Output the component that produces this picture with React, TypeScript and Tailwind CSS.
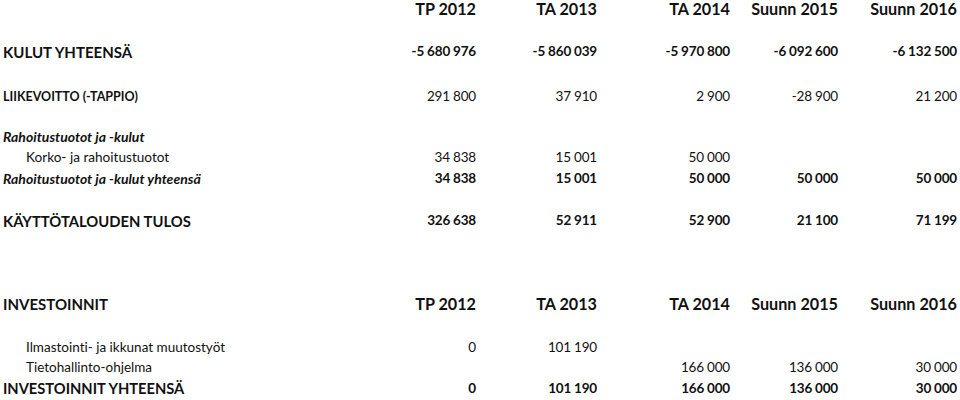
import React from 'react';

type Row = {
  label: string;
  values: string[];
  cls: string; // label style
  numCls: string; // number style
  indent?: boolean;
  h: string;
  mt?: string;
};

const years = ['TP 2012', 'TA 2013', 'TA 2014', 'Suunn 2015', 'Suunn 2016'];

const numBold = 'text-[13.5px] font-bold tracking-[-0.2px]';
const numReg = 'text-[13.5px] font-normal tracking-[-0.2px]';

const rows: Row[] = [
  { label: 'KULUT YHTEENSÄ', values: ['-5 680 976', '-5 860 039', '-5 970 800', '-6 092 600', '-6 132 500'], cls: 'text-[15px] font-bold', numCls: numBold, h: 'h-[20px]', mt: 'mt-[24px]' },
  { label: 'LIIKEVOITTO (-TAPPIO)', values: ['291 800', '37 910', '2 900', '-28 900', '21 200'], cls: 'text-[12.5px] font-bold', numCls: numReg, h: 'h-[20px]', mt: 'mt-[25px]' },
  { label: 'Rahoitustuotot ja -kulut', values: ['', '', '', '', ''], cls: 'text-[14px] font-bold italic', numCls: numReg, h: 'h-[21px]', mt: 'mt-[19px]' },
  { label: 'Korko- ja rahoitustuotot', values: ['34 838', '15 001', '50 000', '', ''], cls: 'text-[13.6px]', numCls: numReg, indent: true, h: 'h-[21px]' },
  { label: 'Rahoitustuotot ja -kulut yhteensä', values: ['34 838', '15 001', '50 000', '50 000', '50 000'], cls: 'text-[14px] font-bold italic', numCls: numBold, h: 'h-[21px]' },
  { label: 'KÄYTTÖTALOUDEN TULOS', values: ['326 638', '52 911', '52 900', '21 100', '71 199'], cls: 'text-[14.8px] font-bold', numCls: numBold, h: 'h-[20px]', mt: 'mt-[22px]' },
];

const invRows: Row[] = [
  { label: 'Ilmastointi- ja ikkunat muutostyöt', values: ['0', '101 190', '', '', ''], cls: 'text-[13.5px]', numCls: numReg, indent: true, h: 'h-[20px]', mt: 'mt-[25px]' },
  { label: 'Tietohallinto-ohjelma', values: ['', '', '166 000', '136 000', '30 000'], cls: 'text-[13.5px]', numCls: numReg, indent: true, h: 'h-[20px]' },
  { label: 'INVESTOINNIT YHTEENSÄ', values: ['0', '101 190', '166 000', '136 000', '30 000'], cls: 'text-[14.7px] font-bold', numCls: numBold, h: 'h-[21px]' },
];

const grid = 'grid grid-cols-[1fr_120px_121px_133px_108px_119px] items-center';

function TableRow({ r }: { r: Row }) {
  return (
    <div className={`${grid} ${r.h} ${r.mt ?? ''}`}>
      <div className={`whitespace-nowrap ${r.cls} ${r.indent ? 'pl-[23px]' : ''}`}>{r.label}</div>
      {r.values.map((v, i) => (
        <div key={i} className={`text-right whitespace-nowrap ${r.numCls}`}>{v}</div>
      ))}
    </div>
  );
}

function HeaderRow({ title, mt }: { title: string; mt?: string }) {
  return (
    <div className={`${grid} h-[18px] text-[16.2px] font-bold ${mt ?? ''}`}>
      <div className="whitespace-nowrap text-[15px]">{title}</div>
      {years.map((y) => (
        <div key={y} className="text-right whitespace-nowrap">{y}</div>
      ))}
    </div>
  );
}

export default function App() {
  return (
    <div className="w-[960px] h-[400px] overflow-hidden bg-white text-[#111] pl-[3px] pr-[3px] font-['Lato',sans-serif] leading-none [font-variant-ligatures:none]">
      <HeaderRow title="" />
      {rows.map((r) => (
        <TableRow key={r.label} r={r} />
      ))}
      <HeaderRow title="INVESTOINNIT" mt="mt-[64px]" />
      {invRows.map((r) => (
        <TableRow key={r.label} r={r} />
      ))}
    </div>
  );
}
